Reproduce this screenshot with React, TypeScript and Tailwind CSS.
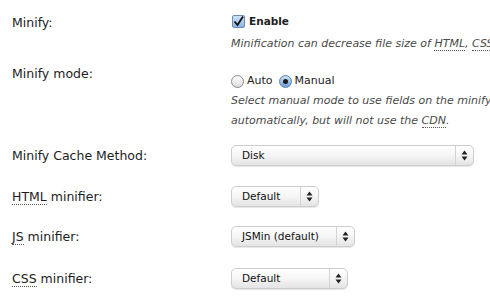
import React from 'react';

const label = 'text-[12.5px] leading-4 text-[#1c1c1c]';
const note = 'text-[11px] leading-5 italic text-[#4a4a4a] whitespace-nowrap';
const abbr = 'border-b border-dotted border-[#555] no-underline';

function Arrows() {
  return (
    <svg width="7" height="11" viewBox="0 0 7 11" className="block">
      <path d="M3.5 0.5 L6.5 4.5 L0.5 4.5 Z" fill="#222" />
      <path d="M3.5 10.5 L6.5 6.5 L0.5 6.5 Z" fill="#222" />
    </svg>
  );
}

function Select({ value, width }: { value: string; width: string }) {
  return (
    <div
      className={`${width} flex h-[21px] items-stretch rounded-[5px] border border-[#cdcdcd] bg-gradient-to-b from-white via-[#f5f5f5] to-[#e4e4e4] shadow-[0_1px_1px_rgba(0,0,0,0.1)]`}
    >
      <span className="flex flex-1 items-center pl-[10px] text-[10.5px] text-[#111]">{value}</span>
      <span className="flex w-[18px] items-center justify-center border-l border-[#d3d3d3]">
        <Arrows />
      </span>
    </div>
  );
}

function Row({ title, children, className }: { title: React.ReactNode; children: React.ReactNode; className: string }) {
  return (
    <div className={`flex ${className}`}>
      <div className={`w-[231px] shrink-0 pl-3 ${label}`}>{title}</div>
      <div className="min-w-0 flex-1">{children}</div>
    </div>
  );
}

export default function App() {
  return (
    <div className="h-[297px] w-[490px] overflow-hidden bg-white" style={{ fontFamily: '"DejaVu Sans", "Liberation Sans", sans-serif' }}>
      <Row title="Minify:" className="h-[61px] pt-[15px]">
        <label className="-mt-px flex items-center gap-[4px] pl-px text-[10.5px] font-bold text-[#222]">
          <span className="flex h-[13px] w-[13px] items-center justify-center rounded-[2px] border border-[#6d8bb3] bg-gradient-to-b from-[#cfe2f7] to-[#8db5e3]">
            <svg width="11" height="11" viewBox="0 0 11 11">
              <path d="M1.5 5.5 L4.5 9 L10 0.5" fill="none" stroke="#111" strokeWidth="1.8" />
            </svg>
          </span>
          Enable
        </label>
        <p className={`${note} mt-[4px]`}>
          Minification can decrease file size of <span className={abbr}>HTML</span>, <span className={abbr}>CSS</span>, <span className={abbr}>JS</span> and feeds respectively by ~10% on average.
        </p>
      </Row>
      <Row title="Minify mode:" className="h-[87px] pt-[5px]">
        <div className="flex items-center pt-[7px] text-[11px] text-[#222]">
          <span className="h-[13px] w-[13px] rounded-full border border-[#8a8a8a] bg-gradient-to-b from-white to-[#dcdcdc]" />
          <span className="ml-[3px] mr-[6px]">Auto</span>
          <span className="flex h-[13px] w-[13px] items-center justify-center rounded-full border border-[#5b7fb0] bg-gradient-to-b from-[#cfe2f7] to-[#6fa0da]">
            <span className="h-[5px] w-[5px] rounded-full bg-[#1a1a1a]" />
          </span>
          <span className="ml-[3px]">Manual</span>
        </div>
        <p className={`${note} mt-[1px]`}>
          Select manual mode to use fields on the minify settings tab to specify files to be minified,
          <br />
          automatically, but will not use the <span className={abbr}>CDN</span>.
        </p>
      </Row>
      <Row title="Minify Cache Method:" className="h-[41px] items-start">
        <div className="-mt-[3px]">
          <Select value="Disk" width="w-[243px]" />
        </div>
      </Row>
      <Row title={<><span className={abbr}>HTML</span> minifier:</>} className="h-[40px] items-start">
        <div className="-mt-[3px]">
          <Select value="Default" width="w-[88px]" />
        </div>
      </Row>
      <Row title={<><span className={abbr}>JS</span> minifier:</>} className="h-[42px] items-start">
        <div className="-mt-[3px]">
          <Select value="JSMin (default)" width="w-[124px]" />
        </div>
      </Row>
      <Row title={<><span className={abbr}>CSS</span> minifier:</>} className="h-[41px] items-start">
        <div className="-mt-[3px]">
          <Select value="Default" width="w-[117px]" />
        </div>
      </Row>
    </div>
  );
}
